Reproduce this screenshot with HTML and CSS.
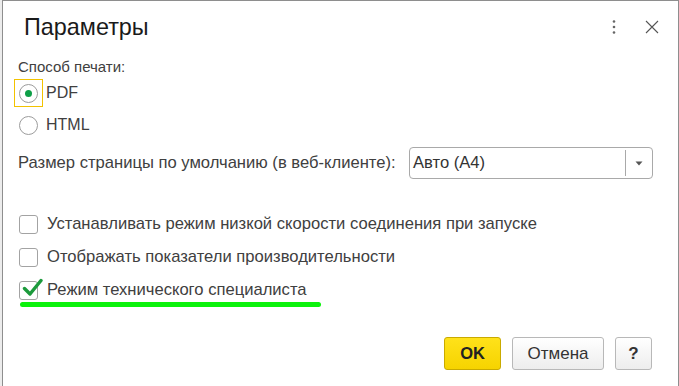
FILE: index.html
```html
<!DOCTYPE html>
<html lang="ru">
<head>
  <meta charset="UTF-8" />
  <meta name="viewport" content="width=device-width, initial-scale=1.0" />
  <title>Параметры</title>
  <link rel="stylesheet" href="styles.css">
</head>
<body>
  <div class="dialog">
    <div class="header">
      <h1 class="title">Параметры</h1>
      <div class="header-tools">
        <span class="tool">
          <svg width="14" height="14" viewBox="0 0 14 14"><circle cx="7" cy="1.5" r="1.3" fill="#666"/><circle cx="7" cy="7" r="1.3" fill="#666"/><circle cx="7" cy="12.5" r="1.3" fill="#666"/></svg>
        </span>
        <span class="tool">
          <svg width="14" height="14" viewBox="0 0 14 14"><path d="M1 1 L13 13 M13 1 L1 13" stroke="#555" stroke-width="1.1" fill="none"/></svg>
        </span>
      </div>
    </div>

    <div class="content">
      <div class="group-label">Способ печати:</div>

      <label class="radio focused">
        <span class="radio-frame"><span class="radio-circle checked"></span></span>
        PDF
      </label>
      <label class="radio">
        <span class="radio-frame"><span class="radio-circle"></span></span>
        HTML
      </label>

      <div class="field-row">
        <span class="field-label">Размер страницы по умолчанию (в веб-клиенте):</span>
        <div class="select">
          <span class="select-value">Авто (А4)</span>
          <span class="select-btn">
            <svg width="8" height="5" viewBox="0 0 8 5"><path d="M0.5 0.5 H7.5 L4 4.5 Z" fill="#555"/></svg>
          </span>
        </div>
      </div>

      <div class="checks">
        <label class="check"><span class="box"></span>Устанавливать режим низкой скорости соединения при запуске</label>
        <label class="check"><span class="box"></span>Отображать показатели производительности</label>
        <label class="check">
          <span class="box">
            <svg class="tick" width="22" height="22" viewBox="0 0 22 22"><path d="M3.5 11.5 L9 17 L20 3.5" stroke="#1c9a3c" stroke-width="3.4" fill="none" stroke-linecap="round" stroke-linejoin="round"/></svg>
          </span>
          Режим технического специалиста
          <span class="marker"></span>
        </label>
      </div>
    </div>

    <div class="footer">
      <button class="btn btn-primary">OK</button>
      <button class="btn">Отмена</button>
      <button class="btn btn-help">?</button>
    </div>
  </div>
</body>
</html>
```

FILE: styles.css
```css
body {
  margin: 0;
  padding: 0;
  background: #ececec;
  font-family: Arial, "Liberation Sans", sans-serif;
  overflow: hidden;
}
.dialog {
  box-sizing: border-box;
  margin-left: 2px;
  width: 677px;
  height: 400px;
  background: #fff;
  border: 1px solid #8e8e8e;
  border-bottom: none;
}
.header {
  display: flex;
  align-items: center;
  padding: 12px 19px 0 21px;
}
.title {
  margin: 0;
  flex: 1;
  font-size: 23.4px;
  line-height: 28px;
  font-weight: normal;
  color: #1a1a1a;
}
.header-tools {
  display: flex;
  align-items: center;
  gap: 24px;
}
.tool {
  display: flex;
  width: 14px;
  height: 14px;
}
.content {
  padding: 17px 25px 0 15px;
  font-size: 16.6px;
  line-height: 18px;
  color: #404040;
}
.group-label {
  height: 18px;
  font-size: 15px;
}
.radio {
  display: flex;
  align-items: center;
  height: 28px;
  margin-left: -4px;
  margin-top: 4px;
  gap: 3px;
  font-size: 16px;
}
.radio.focused {
  margin-top: 3px;
}
.radio-frame {
  box-sizing: border-box;
  width: 29px;
  height: 28px;
  display: flex;
  align-items: center;
  justify-content: center;
  border: 1px solid transparent;
}
.focused .radio-frame {
  border-color: #f2c200;
}
.radio-circle {
  box-sizing: border-box;
  width: 19px;
  height: 19px;
  border: 1px solid #9c9c9c;
  border-radius: 50%;
  display: flex;
  align-items: center;
  justify-content: center;
}
.radio-circle.checked::after {
  content: "";
  width: 7px;
  height: 7px;
  border-radius: 50%;
  background: #0e9f47;
}
.field-row {
  display: flex;
  align-items: center;
  margin-top: 8px;
  height: 32px;
}
.select {
  box-sizing: border-box;
  margin-left: auto;
  width: 244px;
  height: 32px;
  border: 1px solid #a9a9a9;
  border-radius: 4px;
  display: flex;
  align-items: center;
  color: #333;
}
.select-value {
  flex: 1;
  padding-left: 3px;
}
.select-btn {
  width: 26px;
  height: 26px;
  border-left: 1px solid #a9a9a9;
  display: flex;
  align-items: center;
  justify-content: center;
}
.checks {
  margin-top: 33px;
  display: flex;
  flex-direction: column;
  gap: 9px;
}
.check {
  position: relative;
  display: flex;
  align-items: center;
  height: 24px;
}
.box {
  position: relative;
  box-sizing: border-box;
  width: 19px;
  height: 19px;
  margin-left: 1px;
  margin-right: 9px;
  border: 1px solid #a3a3a3;
  border-radius: 3px;
}
.tick {
  position: absolute;
  left: 1px;
  top: -5px;
}
.marker {
  position: absolute;
  left: 2px;
  top: 24px;
  width: 301px;
  height: 5px;
  border-radius: 3px;
  background: #0cf20c;
}
.footer {
  display: flex;
  justify-content: flex-end;
  gap: 11px;
  margin-top: 35px;
  padding-right: 26px;
}
.btn {
  box-sizing: border-box;
  height: 33px;
  padding: 0;
  border: 1px solid #b8b8b8;
  border-radius: 3px;
  background: linear-gradient(#ffffff, #ededed);
  font-family: Arial, "Liberation Sans", sans-serif;
  font-size: 17px;
  color: #333;
  width: 92px;
}
.btn-primary {
  width: 57px;
  background: linear-gradient(#ffe21a, #f6d300);
  border-color: #c9aa00;
  font-weight: bold;
  font-size: 16.5px;
  color: #222;
}
.btn-help {
  width: 37px;
  font-weight: bold;
  font-size: 17px;
}
```
